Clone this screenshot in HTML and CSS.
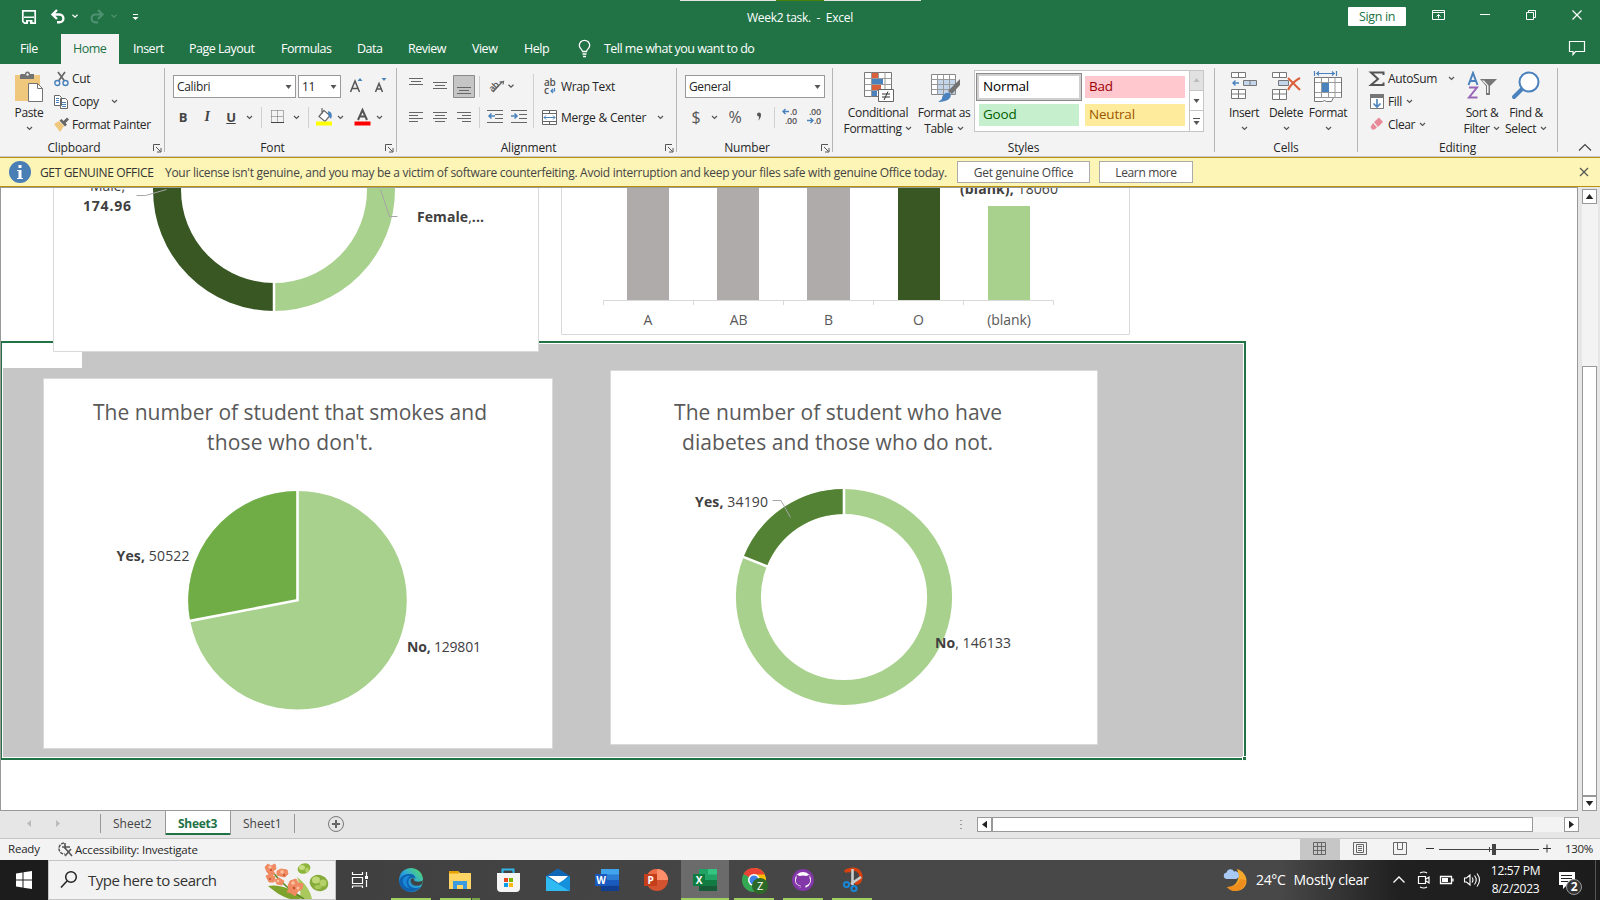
FILE: index.html
```html
<!DOCTYPE html>
<html lang="en">
<head>
<meta charset="utf-8">
<title>Week2 task. - Excel</title>
<link rel="stylesheet" href="styles.css">
</head>
<body>
<svg class="defs" width="0" height="0">
  <symbol id="chev" viewBox="0 0 7 5"><path d="M1 1l2.500 2.400L6 1" fill="none" stroke="currentColor" stroke-width="1.200"/></symbol>
  <symbol id="tri" viewBox="0 0 7 4"><path d="M.5 0h6L3.500 4z" fill="currentColor"/></symbol>
  <symbol id="launch" viewBox="0 0 9 9"><path d="M.5 7V.5H7M3 3l4.500 4.500M8 4v4H4" fill="none" stroke="#555" stroke-width="1"/></symbol>
</svg>

<header class="title">
  <svg class="qat" width="150" height="34">
    <path d="M22.800 10.800h12.400v12.400H24.500l-1.700-1.700z" fill="none" stroke="#fff" stroke-width="1.700"/><path d="M24 16.500h10v1.500H24zM26 20h6.500v4H26z" fill="#fff"/><path d="M28 21.500h2V24h-2z" fill="#217346"/>
    <path d="M57 10l-4.500 4.500 4.500 4.500M53 14.500h6.500a3.900 3.900 0 0 1 0 7.800H57" fill="none" stroke="#fff" stroke-width="2.400"/>
    <path d="M72.500 14.800l2.500 2.400 2.500-2.400" fill="none" stroke="#fff" stroke-width="1.200"/>
    <path d="M98 10l4.500 4.500-4.500 4.500M102 14.500h-6.500a3.900 3.900 0 0 0 0 7.800H98" fill="none" stroke="#4f9170" stroke-width="2.200"/>
    <path d="M111.500 14.800l2.500 2.400 2.500-2.400" fill="none" stroke="#4f9170" stroke-width="1.200"/>
    <path d="M133 14.500h5" stroke="#fff"/><path d="M132.500 17h6l-3 3z" fill="#fff"/>
  </svg>
  <div class="strip"><i></i></div>
  <div class="doc">Week2 task.&nbsp; -&nbsp; Excel</div>
  <a class="signin">Sign in</a>
  <svg class="winctl" width="194" height="34" fill="none" stroke="#fff">
    <path d="M26.500 10.500h12v9h-12zM26.500 12.500h12M32.500 18.500v-4M30.500 16.500l2-2 2 2"/>
    <path d="M74 14.500h10"/>
    <path d="M120.500 12.500h7v7h-7zM122.500 12.500v-2h7v7h-2"/>
    <path d="M166.500 10.500l9 9M175.500 10.500l-9 9" stroke-width="1.200"/>
  </svg>
</header>

<nav class="tabs">
  <a class="t-file">File</a><a class="t-home">Home</a><a class="t-insert">Insert</a><a class="t-page">Page Layout</a><a class="t-form">Formulas</a><a class="t-data">Data</a><a class="t-review">Review</a><a class="t-view">View</a><a class="t-help">Help</a>
  <svg width="26" height="30"><path d="M4.500 16.500c0-2-3.200-3-3.200-6a5 5 0 0 1 10.400 0c0 3-3.200 4-3.200 6zM4.500 19h4M5 21.500h3" transform="translate(0 1)" fill="none" stroke="#fff" stroke-width="1.300"/></svg>
  <span class="tell">Tell me what you want to do</span>
  <svg class="comment" width="18" height="30"><path d="M1.500 7.500h15v10H7.500L5 20.500v-3H1.500z" fill="none" stroke="#fff" stroke-width="1.200"/></svg>
</nav>

<section class="ribbon">
  <div class="group g-clip">
    <div class="body">
      <div class="big w54 paste">
        <svg width="30" height="32"><path d="M1 4h25v26H1z" fill="#efc77d"/><path d="M7 3h4a2.500 2.500 0 0 1 5 0h4v5H6V4z" fill="#737373"/><circle cx="13.500" cy="3.500" r="1.200" fill="#f3f3f3"/><path d="M14.500 12.500h9l5 5v13h-14z" fill="#fff" stroke="#737373"/><path d="M23.500 12.500v5h5" fill="none" stroke="#737373"/></svg>
        <span>Paste</span><svg class="chev"><use href="#chev"/></svg>
      </div>
      <div class="stack">
        <div class="li"><svg width="18" height="18"><path d="M4 2l6.500 9M11 2L4.500 11" stroke="#666" stroke-width="1.700"/><circle cx="3.300" cy="13" r="2.500" fill="none" stroke="#4a82bd" stroke-width="1.400"/><circle cx="11.500" cy="13" r="2.500" fill="none" stroke="#4a82bd" stroke-width="1.400"/></svg><span>Cut</span></div>
        <div class="li"><svg width="18" height="18"><path d="M.5 2.500h5l2 2v8h-7zM6.500 5.500h5l2 2v8h-7z" fill="#fff" stroke="#666"/><path d="M2 5.500h3M2 7.500h3M2 9.500h3M8 9.500h4M8 11.500h4M8 13.500h4" stroke="#4a82bd"/></svg><span>Copy</span><svg class="chev sp"><use href="#chev"/></svg></div>
        <div class="li"><svg width="18" height="18"><path d="M0 8l5-3 5 5-4 6z" fill="#efc77d"/><path d="M5.500 4.500l2-1.500 2 2L13 1.500 15 3.500 11.500 7l1.500 1.500-2 2z" fill="#666"/></svg><span>Format Painter</span></div>
      </div>
    </div>
    <div class="cap"><span>Clipboard</span><svg class="la"><use href="#launch"/></svg></div>
  </div>

  <div class="group g-font">
    <div class="body col">
      <div class="r1">
        <div class="sel w123"><span>Calibri</span><svg class="tri"><use href="#tri"/></svg></div>
        <div class="sel w43"><span>11</span><svg class="tri"><use href="#tri"/></svg></div>
        <svg width="46" height="22"><g fill="none" stroke="#555" stroke-width="1.500"><path d="M7.500 17L12 6l4.500 11M9 13.500h6"/><path d="M32.500 17L36 8.500l3.500 8.500M33.500 14h5"/></g><path d="M14.500 6h5L17 3zM38.500 3h5L41 6z" fill="#4a82bd"/></svg>
      </div>
      <div class="r2">
        <b class="w24 fb">B</b><i class="w24 fi">I</i><u class="w24 fb">U</u><svg class="chev w13"><use href="#chev"/></svg><s class="vs"></s>
        <svg width="28" height="22"><path d="M9.500 4.500h12M9.500 4.500v12M15.500 4.500v12M21.500 4.500v12M9.500 10.500h12" fill="none" stroke="#666" stroke-dasharray="1 1"/><path d="M9 16.500h13" stroke="#444"/></svg>
        <svg class="chev w13"><use href="#chev"/></svg><s class="vs"></s>
        <svg width="27" height="22"><path d="M15 4.500l-5 6 6 5 5-6-6-5zM13 2v6" fill="#fff" stroke="#666" stroke-width="1.200"/><path d="M19 5c4 1 4.500 4 3 8l-2.500-3z" fill="#4a82bd"/><path d="M7 15.500h16v4H7z" fill="#ff0"/></svg>
        <svg class="chev w9"><use href="#chev"/></svg>
        <svg width="30" height="22"><path d="M13 14L17.500 4l4.500 10M14.500 10.500h6" fill="none" stroke="#555" stroke-width="2"/><path d="M9.500 15.500h16v4h-16z" fill="red"/></svg>
        <svg class="chev w9"><use href="#chev"/></svg>
      </div>
    </div>
    <div class="cap"><span>Font</span><svg class="la"><use href="#launch"/></svg></div>
  </div>

  <div class="group g-align">
    <div class="body">
      <div class="alignL">
        <svg class="bars" width="137" height="61" fill="none" stroke="#666">
          <path d="M56.500 7.500h21v22h-21z" fill="#c5c5c5" stroke="#8a8a8a"/>
          <path d="M12 10.500h14M14 13.500h10M12 16.500h14M36 14.500h14M38 17.500h10M36 20.500h14M60 19.500h14M62 22.500h10M60 25.500h14"/>
          <path d="M12 44.500h14M12 47.500h9M12 50.500h14M12 53.500h9M36 44.500h14M38 47.500h10M36 50.500h14M38 53.500h10M60 44.500h14M65 47.500h9M60 50.500h14M65 53.500h9"/>
          <path d="M82.500 8v21M82.500 39v21M136.500 6v54" stroke="#d0d0d0"/>
          <path d="M96 24l9-10M105 14l1.500-.5-.5 3M105.500 13.500l-3 .5" stroke-width="1.200"/>
          <g stroke="#4a82bd" stroke-width="1.500"><path d="M98 48h-6M94.500 45.500l-2.500 2.500 2.500 2.500M114 48h6M117.500 45.500l2.500 2.500-2.500 2.500"/></g>
          <path d="M90 42.500h16M98 46.500h8M98 50.500h8M90 54.500h16M114 42.500h16M122 46.500h8M122 50.500h8M114 54.500h16"/>
          <text class="glyph" x="-5" y="4" transform="translate(96 18) rotate(-45)">ab</text>
          <path d="M111.500 16.800l2.500 2.400 2.500-2.400" stroke="#555" stroke-width="1.200"/>
        </svg>
      </div>
      <div class="alignR">
        <div class="wr"><svg width="16" height="18"><text class="glyph big-g" x="2" y="8">ab</text><text class="glyph big-g" x="2" y="16">c</text><path d="M12.500 10v3H9M11 11l-2 2 2 2" fill="none" stroke="#4a82bd" stroke-width="1.200"/></svg><span>Wrap Text</span></div>
        <div class="wr"><svg width="16" height="18"><path d="M.5 1.500h14v14H.5zM.5 4.500h14M.5 12.500h14M7.500 1.500v3M7.500 12.500v3" fill="#fff" stroke="#666"/><path d="M2 8.500h11M4 6.500l-2 2 2 2M11 6.500l2 2-2 2" fill="none" stroke="#4a82bd"/></svg><span class="mc">Merge &amp; Center</span><svg class="chev"><use href="#chev"/></svg></div>
      </div>
    </div>
    <div class="cap"><span>Alignment</span><svg class="la"><use href="#launch"/></svg></div>
  </div>

  <div class="group g-num">
    <div class="body col">
      <div class="r1"><div class="sel w140"><span>General</span><svg class="tri"><use href="#tri"/></svg></div></div>
      <div class="r2"><span class="sym w24">$</span><svg class="chev w13"><use href="#chev"/></svg><span class="sym w28">%</span><svg width="20" height="22"><path d="M8 8.500a2 2 0 1 1 4 0q0 4-3 6 1.200-2 1-4-2 0-2-2z" fill="#555"/></svg><s class="vs"></s>
        <svg width="52" height="22"><g class="tiny"><text x="15" y="9">.0</text><text x="10" y="18">.00</text><text x="34" y="9">.00</text><text x="39" y="18">.0</text></g><path d="M14 5.500H8M10.500 3L8 5.500 10.500 8M32 14.500h6M35.500 12l2.500 2.500-2.500 2.500" fill="none" stroke="#4a82bd" stroke-width="1.400"/></svg>
      </div>
    </div>
    <div class="cap"><span>Number</span><svg class="la"><use href="#launch"/></svg></div>
  </div>

  <div class="group g-style">
    <div class="body">
      <div class="big w72">
        <svg width="32" height="32"><path d="M2.500 1.500h27v24h-27z" fill="#fff" stroke="#777"/><path d="M2.500 7.500h27M2.500 13.500h27M2.500 19.500h27M9.500 1.500v24M16.500 1.500v24M23 1.500v24" stroke="#999"/><path d="M10 2h6v5h-6zM10 14h9v5h-9z" fill="#d9603b"/><path d="M10 8h11v5H10zM10 20h5v5h-5z" fill="#4a82bd"/><path d="M16.500 18.500h15v12h-15z" fill="#fff" stroke="#666"/><path d="M20 23h8M20 26h8M26 20.500L22 29" stroke="#333" fill="none"/></svg>
        <span>Conditional<br>Formatting <svg class="chev"><use href="#chev"/></svg></span>
      </div>
      <div class="big w60">
        <svg width="32" height="32"><path d="M3.500 3.500h24v20h-24z" fill="#fff" stroke="#888"/><path d="M9 9h18v14H9z" fill="#c3d5ea"/><path d="M3.500 8.500h24M3.500 13.500h24M3.500 18.500h24M9.500 3.500v20M15.500 3.500v20M21.500 3.500v20" stroke="#999"/><path d="M32 8v6l-8 9-4-3z" fill="#737373"/><path d="M10 31l4-3c0-5 4-7 8-6 3 5-3 9-12 9z" fill="#4a82bd"/></svg>
        <span>Format as<br>Table <svg class="chev"><use href="#chev"/></svg></span>
      </div>
      <div class="gallery">
        <div class="swatches"><span class="normal">Normal</span><span class="bad">Bad</span><span class="good">Good</span><span class="neutral">Neutral</span></div>
        <svg width="15" height="62"><path d="M.5 0v62M0 20.500h15M0 40.500h15" stroke="#c6c6c6"/><path d="M1 1h13v19H1z" fill="#e1e1e1"/><path d="M4.500 12h6L7.500 8z" fill="#bbb"/><path d="M4.500 29h6l-3 4zM4.500 51h6l-3 4z" fill="#555"/><path d="M4 48.500h7" stroke="#555"/></svg>
      </div>
    </div>
    <div class="cap"><span>Styles</span></div>
  </div>

  <div class="group g-cells">
    <div class="body">
      <div class="big w42"><svg width="30" height="32"><path d="M2.500 1.500h14v5h-14zM9.500 1.500v5M2.500 18.500h14v9h-14zM9.500 18.500v9M2.500 23h14" fill="#fff" stroke="#777"/><path d="M14.500 9.500h13v5h-13zM21 9.500v5" fill="#c3d5ea" stroke="#777"/><path d="M10 12H4M6.500 9.500L4 12l2.500 2.500" fill="none" stroke="#4a82bd" stroke-width="1.400"/></svg><span>Insert</span><svg class="chev"><use href="#chev"/></svg></div>
      <div class="big w42"><svg width="30" height="32"><path d="M1.500 1.500h14v5h-14zM8.500 1.500v5M1.500 18.500h14v10h-14zM8.500 18.500v10M1.500 23h14" fill="#fff" stroke="#777"/><path d="M7.500 9.500h10v5h-10z" fill="#c3d5ea" stroke="#777"/><path d="M17 7l12 12M29 7c-4 2-9 6-12 12" stroke="#d9603b" stroke-width="2" fill="none"/></svg><span>Delete</span><svg class="chev"><use href="#chev"/></svg></div>
      <div class="big w42"><svg width="30" height="32"><path d="M1.500 6.500h27v20h-8l-2 4h-5l-2-1-2 1h-8z" fill="#fff" stroke="#777"/><path d="M2 11.500h26M2 21.500h26M8.500 6.500v20M15.500 6.500v20M22 6.500v20M2 26.500h26" stroke="#999"/><path d="M9 12h7v9H9z" fill="#4a82bd"/><path d="M1.500 0v5M23.500 0v5M3 2.500h19M6 .5l-2 2 2 2M19 .5l2 2-2 2" fill="none" stroke="#4a82bd" stroke-width="1.200"/></svg><span>Format</span><svg class="chev"><use href="#chev"/></svg></div>
    </div>
    <div class="cap"><span>Cells</span></div>
  </div>

  <div class="group g-edit">
    <div class="body">
      <div class="stack es">
        <div class="li"><svg width="20" height="18"><path d="M15.500 5V2.500H3l7 6.500-7 6h12.500v-2.500" fill="none" stroke="#555" stroke-width="2"/></svg><span class="as">AutoSum</span><svg class="chev"><use href="#chev"/></svg></div>
        <div class="li"><svg width="20" height="18"><path d="M2.500 1.500h13v14h-13z" fill="#fff" stroke="#777"/><path d="M2 1h14v4H2z" fill="#777"/><path d="M9 6v8M5.500 10.500L9 14l3.500-3.500" fill="none" stroke="#4a82bd" stroke-width="1.600"/></svg><span>Fill</span><svg class="chev s4"><use href="#chev"/></svg></div>
        <div class="li"><svg width="20" height="18"><path d="M6 6l5-4.500 4 4.500-5 5z" fill="#e88a9a"/><path d="M5 7l4 4.500-2.500 2H4L2.500 11z" fill="#e88a9a"/></svg><span>Clear</span><svg class="chev s4"><use href="#chev"/></svg></div>
      </div>
      <div class="big w44"><svg width="32" height="32"><path d="M2.500 14L7 2l4.500 12M4 10h6" fill="none" stroke="#4a82bd" stroke-width="2"/><path d="M3 16.500h8L3 26.500h8.500" fill="none" stroke="#9966b8" stroke-width="2"/><path d="M14 8h17l-7 7v9h-4v-9z" fill="#777"/><path d="M21 14.500V22h1.500v-7.500l-4.500-5h-2z" fill="#f3f3f3"/></svg><span>Sort &amp;<br>Filter <svg class="chev"><use href="#chev"/></svg></span></div>
      <div class="big w44"><svg width="32" height="32"><path d="M13 17L4 26" stroke="#4a82bd" stroke-width="4" stroke-linecap="round"/><circle cx="19" cy="11" r="9.500" fill="#fff" stroke="#4a82bd" stroke-width="2"/></svg><span>Find &amp;<br>Select <svg class="chev"><use href="#chev"/></svg></span></div>
    </div>
    <div class="cap"><span>Editing</span></div>
  </div>
  <svg class="collapse" width="14" height="9"><path d="M1 7.500l6-6 6 6" fill="none" stroke="#444" stroke-width="1.200"/></svg>
</section>

<div class="notice">
  <svg width="31" height="28"><circle cx="20" cy="14" r="11" fill="#4a7fb5"/><path d="M18.500 12h3v9h-3zM18.500 7h3v3h-3z" fill="#fff"/><path d="M17 12h3v1h-3zM17 20h6v1h-6z" fill="#fff"/></svg>
  <span class="gg">GET GENUINE OFFICE</span><span class="msg">Your license isn't genuine, and you may be a victim of software counterfeiting. Avoid interruption and keep your files safe with genuine Office today.</span>
  <a class="btn b1">Get genuine Office</a><a class="btn b2">Learn more</a>
  <svg class="nx" width="10" height="10"><path d="M1 1l8 8M9 1L1 9" stroke="#555" stroke-width="1.200"/></svg>
</div>

<main class="work">
  <div class="sheet">
    <svg width="1576" height="622" viewBox="1 188 1576 622">
      <path d="M1 341h1245v419H1z" fill="#217346"/><path d="M2 343h1242v415H2z" fill="#fff"/><path d="M3 344h1240v413H3z" fill="#c6c6c6"/><path d="M2 343h80v25H2z" fill="#fff"/>
      <path d="M1242.500 756.500h4v4h-4z" fill="#217346" stroke="#fff"/>
      <g fill="#fff" stroke="#d9d9d9"><path d="M53.500 100h485v251.500h-485z"/><path d="M561.500 100h568v234.500h-568z"/><path d="M43.500 378.500h509v370h-509z"/><path d="M610.500 370.500h487v374h-487z"/></g>
      <path d="M274 83a107 107 0 0 1 0 214" fill="none" stroke="#a9d18e" stroke-width="28"/>
      <path d="M274 83a107 107 0 0 0 0 214" fill="none" stroke="#385723" stroke-width="28"/>
      <path d="M274 280v32" stroke="#fff" stroke-width="2.500"/>
      <g fill="none" stroke="#a6a6a6"><path d="M136.500 195.500h9l21-6M380.500 189.500l9 27h8"/></g>
      <path d="M627 188h42v112h-42zM717 188h42v112h-42zM807 188h43v112h-43z" fill="#afabab"/><path d="M898 188h42v112h-42z" fill="#385723"/><path d="M988 206h42v94h-42z" fill="#a9d18e"/>
      <path d="M603.500 305v-4.500h450v4.500M693.500 300v5M783.500 300v5M873.500 300v5M963.500 300v5" fill="none" stroke="#d9d9d9"/>
      <circle cx="297.500" cy="600.300" r="109.300" fill="#a9d18e"/><path d="M297.500 600.300V491A109.300 109.300 0 0 0 190.200 620.900z" fill="#70ad47"/>
      <path d="M297.500 490v110.300L189 621.100" fill="none" stroke="#fff" stroke-width="2.600"/>
      <circle cx="844" cy="597" r="95.600" fill="none" stroke="#a9d18e" stroke-width="25"/><path d="M844 501.400A95.600 95.600 0 0 0 755.200 561.600" fill="none" stroke="#548235" stroke-width="25"/>
      <path d="M844 487v29M768.500 567L742 556.400" stroke="#fff" stroke-width="2.600"/>
      <path d="M772.500 500.500h8.500l9.500 17" fill="none" stroke="#a6a6a6"/>
      <g class="ct"><text x="93" y="419.500" textLength="394">The number of student that smokes and</text><text x="207" y="449.500" textLength="166">those who don't.</text><text x="674" y="419.500" textLength="328">The number of student who have</text><text x="682" y="449.500" textLength="311">diabetes and those who do not.</text></g>
      <g class="cl"><text x="90" y="190.500" textLength="35">Male,</text><text class="bo" x="83" y="211" textLength="48">174.96</text><text x="417" y="222" textLength="67"><tspan class="bo">Female</tspan>,<tspan class="bo">...</tspan></text>
      <text x="960" y="194" textLength="98"><tspan class="bo">(blank),</tspan> 18060</text>
      <text x="116.500" y="561" textLength="73"><tspan class="bo">Yes,</tspan> 50522</text><text x="407" y="652" textLength="74"><tspan class="bo">No,</tspan> 129801</text><text x="695" y="507" textLength="73"><tspan class="bo">Yes,</tspan> 34190</text><text x="935" y="648" textLength="76"><tspan class="bo">No</tspan>, 146133</text></g>
      <g class="ca"><text x="648" y="325">A</text><text x="738.500" y="325">AB</text><text x="828.500" y="325">B</text><text x="918.500" y="325">O</text><text x="1009" y="325">(blank)</text></g>
    </svg>
  </div>
  <div class="vscroll"><a><svg class="tri up"><use href="#tri"/></svg></a><div class="vtrack"></div><div class="vthumb"></div><a><svg class="tri"><use href="#tri"/></svg></a></div>
</main>

<div class="sheets">
  <svg width="100" height="27"><path d="M31 9v7l-4-3.500zM56 9v7l4-3.500z" fill="#bbb"/></svg>
  <a class="s2">Sheet2</a><a class="s3">Sheet3</a><a class="s1">Sheet1</a>
  <svg class="plus" width="18" height="18"><circle cx="9" cy="9" r="7.500" fill="none" stroke="#777"/><path d="M9 5v8M5 9h8" stroke="#666" stroke-width="2"/></svg>
  <svg class="dots" width="4" height="12"><path d="M1 1h2v1H1zM1 5h2v1H1zM1 9h2v1H1z" fill="#999"/></svg>
  <div class="hscroll"><a><svg class="tri lf"><use href="#tri"/></svg></a><div class="hthumb"></div><div class="htrack"></div><a><svg class="tri rt"><use href="#tri"/></svg></a></div>
</div>

<div class="status">
  <span class="ready">Ready</span>
  <svg width="18" height="20"><path d="M7 3a5.500 5.500 0 1 0 1 11" fill="none" stroke="#555" stroke-width="1.500" stroke-dasharray="3 1"/><path d="M8 3v6M5 7h8M8 8l7 8M14 9l-6 7" fill="none" stroke="#555" stroke-width="1.600"/></svg>
  <span class="acc">Accessibility: Investigate</span>
  <svg class="views" width="254" height="21" fill="none" stroke="#666"><path d="M0 0h40v21H0z" fill="#c6c6c6" stroke="none"/><path d="M13.500 3.500h12v12h-12zM13.500 7.500h12M13.500 11.500h12M17.500 3.500v12M21.500 3.500v12"/><path d="M53.500 3.500h13v12h-13zM56.500 5.500h7v8h-7zM58 7.500h4M58 9.500h4M58 11.500h4"/><path d="M93.500 3.500h13v12h-13zM97.500 3.500v7h5v-7"/><path d="M126 9.500h8M243 9.500h8M247 5.500v8" stroke="#333"/><path d="M139 10.500h100M189.500 8v5" stroke="#444"/><path d="M192 5h4v11h-4z" fill="#444" stroke="none"/></svg>
  <span class="zoom">130%</span>
</div>

<footer class="taskbar">
  <div class="start"><svg width="48" height="40"><path d="M16 13.500l6.500-1v7H16zM23.500 12.300l8.500-1.300v8.500h-8.500zM16 20.500h6.500v7l-6.500-1zM23.500 20.500H32V29l-8.500-1.300z" fill="#fff"/></svg></div>
  <div class="search">
    <svg width="39" height="38"><circle cx="22" cy="16" r="5.300" fill="none" stroke="#222" stroke-width="1.500"/><path d="M18 20l-6 6.500" stroke="#222" stroke-width="1.500"/></svg>
    <span>Type here to search</span>
    <svg class="flower" width="72" height="38" viewBox="263 861 72 38">
      <path d="M268 886c10-2 22 2 30 8l8 5h-16c-8-2-16-8-22-13z" fill="#7da32c"/><path d="M297 877c8 6 13 13 15 22h-12c1-8 0-14-3-22z" fill="#a9c95c"/><path d="M270 869c8 10 20 22 34 30" stroke="#5a8a28" stroke-width="1.500" fill="none"/>
      <g fill="#f08a62" stroke="#f08a62" stroke-linejoin="round"><path d="M265 867l3-3 3 2 4-2 1 5-3 2 2 3-5 1-3-3z"/><path d="M277 871l4-2 6 1 1 4-3 3-5-1-3-1z"/><path d="M266 876l4-2 5 3-1 5-5 0z"/><path d="M275 880l4-2 5 3-2 4-5-1z"/><path d="M288 886l2-5 6-2 2 4 5 1-1 5-4 2-3 5-4-3-4-1 2-3z"/></g>
      <g fill="#fbc4a0"><circle cx="270" cy="867" r="1.600"/><circle cx="282" cy="872" r="1.800"/><circle cx="278" cy="881" r="1.300"/><circle cx="293" cy="883" r="1.800"/><circle cx="298" cy="888" r="1.500"/></g>
      <g fill="#c04e30"><circle cx="271" cy="870" r="1"/><circle cx="284" cy="875" r="1"/><circle cx="294" cy="888" r="1.300"/><circle cx="270" cy="879" r="1"/></g>
      <ellipse cx="304" cy="868.500" rx="6.500" ry="5" fill="#8db43c" transform="rotate(-20 304 868.500)"/><ellipse cx="302" cy="867.500" rx="3" ry="2.500" fill="#c8de83"/><ellipse cx="307" cy="870" rx="2" ry="2.500" fill="#b4d066"/><ellipse cx="319" cy="883" rx="9.500" ry="8" fill="#86ab3a" transform="rotate(20 319 883)"/><ellipse cx="316" cy="880" rx="4" ry="3.500" fill="#c0d878"/><ellipse cx="323" cy="883" rx="3.500" ry="3.500" fill="#b4d066"/><ellipse cx="318" cy="887" rx="3.500" ry="2" fill="#a9c95c"/>
    </svg>
  </div>
  <svg class="apps" width="544" height="40" viewBox="336 860 544 40">
    <defs>
      <linearGradient id="eg" x1="0" y1="1" x2="1" y2="0"><stop offset="0" stop-color="#0c59a4"/><stop offset=".5" stop-color="#2aa5de"/><stop offset="1" stop-color="#5be05b"/></linearGradient>
    </defs>
    <path d="M681 860h48v40h-48z" fill="#6b6b6b"/>
    <g fill="none" stroke="#fff" stroke-width="1.200"><path d="M352.500 872v2.500h10V872M352.500 877.500h10v6h-10zM352.500 888v-2h10v2M366.500 872v4M366.500 880v7"/><path d="M365 876h3v3h-3z" fill="#fff" stroke="none"/></g>
    <circle cx="411" cy="880" r="12" fill="url(#eg)"/><path d="M399.500 883c0-7 5-9 10-9 4 0 6 2 6 5-2-2-6-2-7 2-1 5 4 9 12 6-5 6-17 7-21-4z" fill="#0f62b0"/><path d="M410 876.500c-4 2-5 8 0 12-6-1-9-7-6-11 1-1 4-2 6-1z" fill="#1a86d8"/><path d="M410.500 880c1-3 4-2 4 1 3 1 7 1 8.500-1l-1 4c-5 4-12 1-11.500-4z" fill="#404344"/>
    <path d="M449 871h9l2 2h11v16h-22z" fill="#ffd566"/><path d="M449 871h9l1 2.500h-10z" fill="#e6a200"/><path d="M453 881h14v8h-4v-4h-6v4h-4z" fill="#3c9be0"/>
    <path d="M502.500 874v-4.500h11v4.500" fill="none" stroke="#32b5ea" stroke-width="2"/><path d="M497 873h23v15q0 4-4 4h-15q-4 0-4-4z" fill="#f5f5f5"/><path d="M504 878h4v4h-4z" fill="#e74623"/><path d="M509 878h4v4h-4z" fill="#7ab800"/><path d="M504 883h4v4h-4z" fill="#0a9ee8"/><path d="M509 883h4v4h-4z" fill="#fdb813"/>
    <path d="M546 876l12-7.500 12 7.500v15h-24z" fill="#1068b4"/><path d="M548 876h20l-8 8z" fill="#fff"/><path d="M546 876l24 15h-24z" fill="#2fbaf2"/><path d="M570 876l-12 7.500 12 7.500z" fill="#1590dc"/>
    <path d="M601 869h18v22h-18z" fill="#2b7cd3"/><path d="M601 869h18v5.500h-18z" fill="#41a5ee"/><path d="M601 880h18v5.500h-18z" fill="#185abd"/><path d="M601 885.500h18v5.500h-18z" fill="#103f91"/><path d="M595 874h12v12h-12z" fill="#1a5abe"/>
    <circle cx="657" cy="880" r="11" fill="#d35230"/><path d="M657 869a11 11 0 0 1 11 11h-11z" fill="#ff8f6b"/><path d="M657 869a11 11 0 0 0-11 11h11z" fill="#ed6c47"/><path d="M644 874h13v12h-13z" fill="#c43e1c"/>
    <path d="M699 869h18v22h-18z" fill="#21a366"/><path d="M708 869h9v5.500h-9z" fill="#33c481"/><path d="M699 880h18v5.500h-18z" fill="#107c41"/><path d="M699 885.500h18v5.500h-18z" fill="#185c37"/><path d="M693 874h12v12h-12z" fill="#107c41"/>
    <g class="appl"><text x="601" y="884">W</text><text x="650.500" y="884">P</text><text x="699" y="884">X</text></g>
    <circle cx="754" cy="880" r="12" fill="#34a853"/><path d="M754 880L743.600 874a12 12 0 0 1 20.800 0z" fill="#ea4335"/><path d="M754 868a12 12 0 0 1 0 24l6-12-6-6z" fill="#fbbc04"/><path d="M754 868a12 12 0 0 1 10.800 6.500H750l-6.400-.5a12 12 0 0 1 10.400-6z" fill="#ea4335"/><circle cx="754" cy="880" r="6" fill="#fff"/><circle cx="754" cy="880" r="4.500" fill="#3f7fe8"/><circle cx="760" cy="886" r="8" fill="#2d6a27"/><text class="zz" x="760" y="889.500">Z</text>
    <circle cx="803" cy="880" r="11" fill="#8437a8"/><circle cx="803" cy="880" r="8" fill="#fff"/><path d="M800.500 888.500v-3c-4-.5-5.500-4-4-7.500v-3.500l3 1.500q3.500-1 7 0l3-1.500v3.500c1.500 3.500 0 7-4 7.500v3z" fill="#8437a8"/><path d="M800.500 886.500q-2.500.5-4-2" fill="none" stroke="#8437a8" stroke-width="1.200"/>
    <path d="M848 872c2-4 9-4 12 1 3 6-1 11-5 10M852 870c-3-1-6 1-7 2" fill="none" stroke="#d8400c" stroke-width="3.200"/><path d="M852.500 869v16M861 877l-10 7" stroke="#ccc" stroke-width="2.600"/><circle cx="846.500" cy="884.500" r="2.600" fill="none" stroke="#1787d8" stroke-width="2"/><circle cx="854" cy="888.500" r="2.600" fill="none" stroke="#1787d8" stroke-width="2"/>
    <path d="M391 898h40v2h-40zM440 898h31v2h-31zM681 898h48v2h-48zM734 898h40v2h-40zM783 898h40v2h-40zM832 898h40v2h-40z" fill="#a0d060"/><path d="M472 898h8v2h-8z" fill="#76a049"/>
  </svg>
  <div class="tray">
    <svg width="26" height="26"><path d="M14 2c13 4 13 22-2 22-4 0-6-2-8-4 9 0 14-8 10-18z" fill="#f5a92b"/><path d="M4 20c9 0 12-4 13-8l6 1c0 12-15 14-19 7z" fill="#ec8318" opacity=".7"/><path d="M3.500 12a3.300 3.300 0 0 1 0-6.500 4 4 0 0 1 7.500-1A3.800 3.800 0 0 1 13 12z" fill="#a9c9f5"/></svg>
    <span class="deg">24°C</span><span class="mostly">Mostly clear</span>
    <svg class="ticons" width="96" height="40" fill="none" stroke="#fff" stroke-width="1.300"><path d="M8.500 22.500l5.500-5.500 5.500 5.500"/><path d="M33.500 16.500h7v7h-7zM41 19l3-2v6l-3-2M35 13q4-2 7 0M35 27q4 2 7 0" stroke-width="1.200"/><path d="M55.500 16.500h11v7h-11zM68 18.500v3"/><path d="M57 18h6v4h-6z" fill="#fff" stroke="none"/><path d="M79.500 18h2l3.500-3v10l-3.500-3h-2zM87 17.500q2 2.500 0 5M89.500 15.500q3.500 4.500 0 9M92 13.500q5 6.500 0 13" stroke-width="1.100"/></svg>
    <div class="clock"><span class="tm">12:57 PM</span><span class="dt">8/2/2023</span></div>
    <svg class="notif" width="42" height="40"><path d="M1 12h16v13H9l-4 4v-4H1z" fill="#fff"/><path d="M3 15.500h11M3 18.500h11M3 21.500h7" stroke="#222"/><circle cx="16" cy="27" r="7.500" fill="#333" stroke="#999"/><text x="16" y="31">2</text><path d="M37.500 0v40" stroke="#555"/></svg>
  </div>
</footer>
</body>
</html>
```
FILE: styles.css
```css
* { box-sizing: border-box; }
body { margin: 0; width: 1600px; height: 900px; overflow: hidden; display: flex; flex-direction: column; font: 12px/16px "Open Sans", "Noto Sans", sans-serif; letter-spacing: -0.35px; color: #262626; background: #e6e6e6; }
svg { display: block; flex: none; }
span, a { white-space: nowrap; }
.defs { position: absolute; }
.chev { width: 7px; height: 5px; color: #555; }
.tri { width: 7px; height: 4px; color: #555; }

.title { height: 34px; flex: none; background: #217346; color: #fff; display: grid; grid-template-columns: 680px 241px 427px 58px 194px; position: relative; }
.qat { grid-column: 1; }
.strip { grid-column: 2; height: 1px; background: #e4e4e4; padding-left: 96px; }
.strip i { display: block; width: 48px; height: 1px; background: #498205; }
.doc { position: absolute; left: 747px; top: 10px; letter-spacing: -.28px; }
.signin { grid-column: 4; height: 19px; margin-top: 7px; background: #fff; color: #217346; text-align: center; line-height: 19px; font-size: 12.500px; border-radius: 1px; }
.winctl { grid-column: 5; }

.tabs { height: 30px; flex: none; background: #217346; color: #fff; display: flex; line-height: 30px; padding-left: 20px; font-size: 12.500px; letter-spacing: -.5px; }
.t-file { width: 41px; }
.t-home { width: 58px; margin-right: 14px; padding-left: 12px; background: #f3f3f3; color: #217346; }
.t-insert { width: 56px; } .t-page { width: 92px; } .t-form { width: 76px; } .t-data { width: 51px; } .t-review { width: 64px; } .t-view { width: 52px; } .t-help { width: 54px; }
.tell { flex: 1; letter-spacing: -.52px; }
.comment { margin-right: 14px; }

.ribbon { height: 93px; flex: none; background: #f3f3f3; border-bottom: 1px solid #c8c8d4; display: flex; }
.group { height: 92px; display: flex; flex-direction: column; padding-top: 4px; background: linear-gradient(#b5b5b5, #b5b5b5) right 4px / 1px 84px no-repeat; }
.g-clip { width: 165px; } .g-font { width: 232px; } .g-align { width: 280px; } .g-num { width: 156px; } .g-style { width: 382px; } .g-cells { width: 143px; } .g-edit { width: 200px; }
.body { height: 71px; display: flex; }
.col { flex-direction: column; }
.cap { height: 16px; display: grid; grid-template-columns: 1fr 11px; text-align: center; line-height: 18px; letter-spacing: -.15px; }
.g-clip .cap span { padding-right: 6px; }
.g-font .cap span { padding-right: 6px; }
.g-align .cap span { padding-right: 6px; }
.g-num .cap span { padding-right: 5px; }
.g-style .cap, .g-cells .cap, .g-edit .cap { grid-template-columns: 1fr; }
.g-style .cap { padding-right: 1px; }
.g-cells .cap, .g-edit .cap { padding-right: 1px; }
.la { width: 9px; height: 9px; margin: 5px 0 0 -1px; }
.w9 { width: 9px; } .w13 { width: 13px; } .w24 { width: 24px; } .w28 { width: 28px; } .w42 { width: 42px; } .w44 { width: 44px; } .w54 { width: 54px; } .w60 { width: 60px; } .w72 { width: 72px; }
.big { display: flex; flex-direction: column; align-items: center; padding-top: 3px; text-align: center; }
.big > span { margin-top: 2px; }
.big > .chev { margin-top: 5px; }
.big span .chev { display: inline-block; vertical-align: 2px; margin-left: 1px; }
.paste { padding-left: 4px; }
.stack { display: flex; flex-direction: column; margin-top: -1px; }
.li { height: 23px; display: flex; align-items: center; }
.sp { margin-left: 12px; }
.r1 { display: flex; padding: 7px 0 0 8px; height: 32px; gap: 2px; }
.r2 { display: flex; height: 22px; margin-top: 6px; padding-left: 6px; align-items: center; }
.sel { height: 23px; border: 1px solid #999; background: #fff; display: flex; align-items: center; justify-content: space-between; padding: 0 3px 0 3px; }
.w123 { width: 123px; } .w43 { width: 43px; } .w140 { width: 140px; }
.fb { font-size: 13px; text-align: center; color: #444; font-weight: 700; }
.fi { font: italic 700 14px "Liberation Serif", serif; text-align: center; color: #444; }
.vs { width: 1px; height: 21px; background: #d0d0d0; margin-left: 5px; }
.glyph { font: 600 9px "Open Sans", sans-serif; fill: #555; stroke: none; }
.glyph.big-g { font-size: 10px; }
.alignR { padding-left: 8px; }
.wr { display: flex; height: 23px; align-items: center; margin-top: 7px; gap: 3px; }
.wr + .wr { margin-top: 8px; letter-spacing: -.22px; }
.wr .mc { margin-right: 8px; }
.sym { font-size: 16px; text-align: center; color: #555; }
.tiny { font: 600 9px "Open Sans", sans-serif; fill: #555; }
.g-num .r2 { padding-left: 7px; }

.g-style .body { padding-left: 9px; }
.gallery { margin-top: 2px; width: 230px; height: 62px; background: #fff; outline: 1px solid #c6c6c6; outline-offset: -1px; display: flex; }
.swatches { width: 215px; padding: 3px 4px 0 2px; display: grid; grid-template-columns: 106px 100px; column-gap: 3px; grid-template-rows: 28px 25px; font-size: 13.500px; letter-spacing: -.2px; row-gap: 3px; }
.swatches span { height: 22px; line-height: 21px; padding-left: 4px; width: 100px; }
.swatches .normal { width: 106px; height: 28px; border: 1px solid #8a8a8a; box-shadow: inset 0 0 0 2px #d0cece; line-height: 25px; padding-left: 6px; color: #000; }
.swatches .bad { background: #ffc7ce; color: #9c0006; margin-top: 3px; }
.swatches .good { background: #c6efce; color: #006100; margin-left: 3px; }
.swatches .neutral { background: #ffeb9c; color: #9c5700; }
.g-cells .body { padding-left: 8px; }
.es { width: 93px; padding-left: 10px; } .es .as { margin-right: 11px; } .s4 { margin-left: 4px; }
.g-edit .big:nth-child(2) { margin-left: 9px; }
.collapse { margin: 79px 0 0 20px; }

.notice { height: 30px; flex: none; background: #fcf5b6; border-top: 1px solid #b5930f; border-bottom: 1px solid #b5930f; display: flex; align-items: center; color: #444; line-height: 18px; }
.gg { margin: 2px 0 0 9px; width: 125px; color: #333; }
.msg { width: 792px; letter-spacing: -.284px; margin-top: 2px; }
.btn { height: 22px; border: 1px solid #ababab; background: #fff; text-align: center; line-height: 21px; }
.b1 { width: 133px; margin-right: 9px; letter-spacing: -.25px; } .b2 { width: 94px; }
.nx { margin-left: auto; margin-right: 11px; }

.work { height: 624px; flex: none; display: flex; background: #e6e6e6; }
.sheet { width: 1578px; border: 1px solid #999; background: #fff; }
.ct { font: 21px "Open Sans", sans-serif; fill: #595959; letter-spacing: 0; }
.cl { font: 14px "Open Sans", sans-serif; fill: #404040; letter-spacing: 0; }
.ca { font: 14px "Open Sans", sans-serif; fill: #595959; text-anchor: middle; letter-spacing: -.1px; }
.bo { font-weight: 700; }
.vscroll { width: 16px; margin: 2px 0 0 4px; display: flex; flex-direction: column; }
.vscroll a, .hscroll a { width: 15px; height: 15px; border: 1px solid #999; background: #fff; display: flex; align-items: center; justify-content: center; flex: none; }
.vscroll .tri, .hscroll .tri { color: #222; width: 9px; height: 5px; }
.up { transform: rotate(180deg); } .lf { transform: rotate(90deg); } .rt { transform: rotate(-90deg); }
.vtrack { height: 162px; background: #f3f3f3; }
.vthumb { width: 15px; height: 430px; border: 1px solid #999; background: #fff; }

.sheets { height: 28px; flex: none; display: flex; border-bottom: 1px solid #c6c6c6; font-size: 12px; color: #444; line-height: 25px; }
.s2 { width: 65px; height: 19px; margin-top: 3px; line-height: 19px; border-left: 1px solid #999; padding-left: 12px; letter-spacing: 0; }
.s3 { width: 66px; height: 24px; background: #fff; border: solid #999; border-width: 0 1px; box-shadow: inset 0 -2px #217346; color: #217346; font-weight: 700; text-align: center; letter-spacing: -.3px; padding-right: 1px; }
.s1 { width: 64px; height: 19px; margin-top: 3px; line-height: 19px; border-right: 1px solid #999; padding-left: 12px; letter-spacing: 0; }
.plus { margin: 4px 0 0 32px; }
.dots { margin: 8px 0 0 614px; }
.hscroll { display: flex; margin: 6px 0 0 14px; }
.hthumb { width: 541px; height: 15px; border: 1px solid #999; background: #fff; }
.htrack { width: 31px; height: 15px; background: #f3f3f3; }

.status { height: 21px; flex: none; background: #f3f3f3; display: flex; align-items: center; font-size: 11.500px; }
.ready { width: 49px; padding-left: 8px; letter-spacing: -.2px; box-sizing: content-box; margin-top: -1px; }
.acc { letter-spacing: -.22px; }
.views { margin-left: auto; }
.zoom { width: 46px; padding-left: 11px; margin-top: -2px; }

.taskbar { height: 40px; flex: none; display: flex; color: #fff; background: linear-gradient(90deg, #1c1c1c 0, #1c1c1c 48px, #404040 336px, #484848 900px, #484848 1280px, #202020 1400px, #1c1c1c); }
.search { width: 288px; background: #f2f2f2; border: 1px solid #c5c5c5; display: flex; color: #333; align-items: center; font-size: 15px; letter-spacing: -.5px; }
.flower { margin-left: auto; }
.appl { font: 700 10px "Open Sans", sans-serif; fill: #fff; text-anchor: middle; }
.zz { font: 11px "Open Sans", sans-serif; fill: #fff; text-anchor: middle; }
.tray { margin-left: 343px; display: flex; align-items: center; font-size: 14px; width: 377px; }
.deg { width: 30px; padding-left: 7px; box-sizing: content-box; }
.mostly { margin-left: 8px; width: 93px; letter-spacing: -.3px; }
.clock { width: 60px; margin-left: 5px; display: flex; flex-direction: column; align-items: center; font-size: 12px; line-height: 18px; letter-spacing: -.3px; }
.notif { margin-left: 13px; }
.notif text { font: 700 12px "Open Sans", sans-serif; fill: #fff; text-anchor: middle; }
```
